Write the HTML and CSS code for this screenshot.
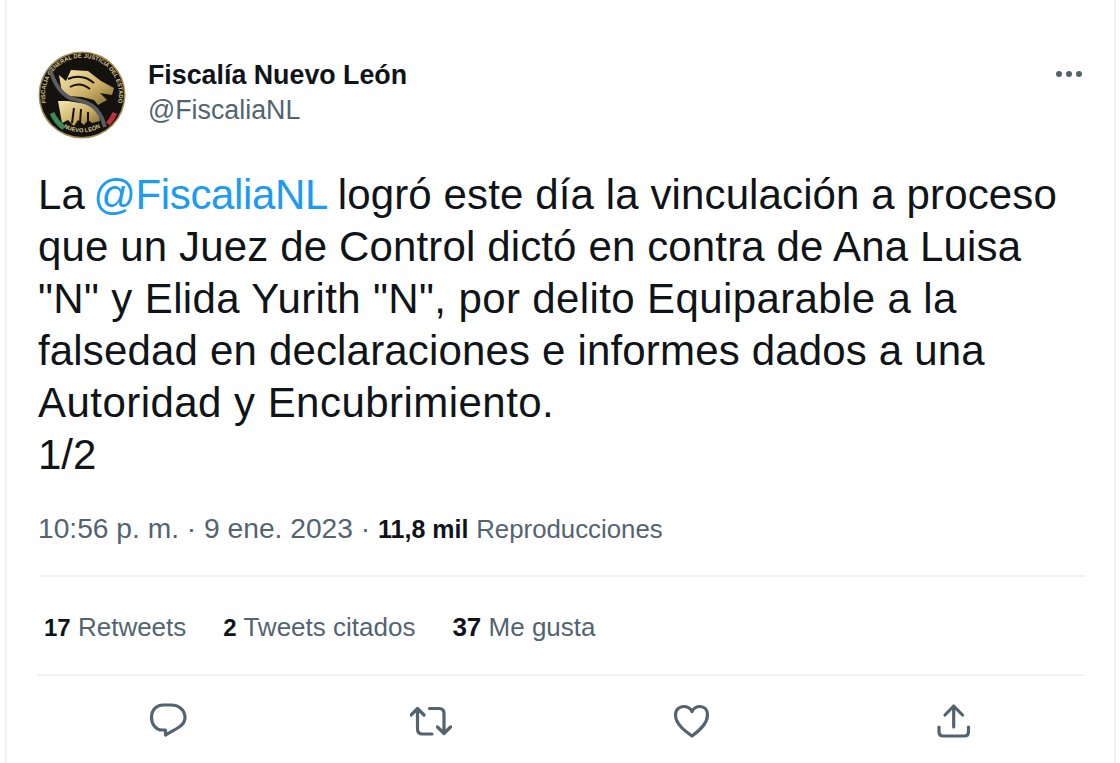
FILE: index.html
```html
<!DOCTYPE html>
<html lang="es">
<head>
<meta charset="utf-8">
<title>Tweet</title>
<link rel="stylesheet" href="styles.css">
</head>
<body>
<main class="card">
  <header class="head">
    <svg class="avatar" viewBox="0 0 88 88" aria-hidden="true">
      <defs>
        <linearGradient id="gold" x1="0" y1="0" x2="1" y2="1">
          <stop offset="0" stop-color="#f4e8b0"/>
          <stop offset=".55" stop-color="#cfb268"/>
          <stop offset="1" stop-color="#7d6a34"/>
        </linearGradient>
        <path id="arcTop" d="M9 66A41 41 0 1 1 79 66" transform="translate(0 -1) translate(4.400 4.400) scale(.9)"/>
        <path id="arcBot" d="M25 76A36 36 0 0 0 63 76"/>
      </defs>
      <circle cx="44" cy="44" r="43.500" fill="#a08a4e"/>
      <circle cx="44" cy="44" r="42" fill="#14120e"/>
      <text class="seal"><textPath href="#arcTop" startOffset="50%" text-anchor="middle">FISCALÍA GENERAL DE JUSTICIA DEL ESTADO</textPath></text>
      <text class="seal"><textPath href="#arcBot" startOffset="50%" text-anchor="middle">NUEVO LEÓN</textPath></text>
      <path d="M14 62Q18 71 26 77" class="flag-g"/>
      <path d="M77 62Q74 68 70 73" class="flag-r"/>
      <path fill="url(#gold)" d="M21 24L28 30L33 19L50 20L63 30L76 37L74 44L62 42L69 49L60 54L56 49L44 46L30 45L24 42Z"/>
      <path fill="url(#gold)" d="M20 50L30 50L48 53L60 60L62 70L54 72L50 69L46 74L40 69L36 75L30 69L24 72Z"/>
      <path d="M30 28Q44 22 56 32M32 36Q42 30 52 38" class="stripe"/>
      <path d="M12 18C16 32 22 42 32 47C45 51 60 50 67 76" class="sash"/>
      <path d="M36 57L34 72M43 58L42 72M50 61L50 70" class="stripe"/>
    </svg>
    <div class="names">
      <div class="name">Fiscalía Nuevo León</div>
      <div class="handle">@FiscaliaNL</div>
    </div>
    <svg class="more" viewBox="0 0 26 6" aria-hidden="true">
      <circle cx="3" cy="3" r="3"/><circle cx="13" cy="3" r="3"/><circle cx="23" cy="3" r="3"/>
    </svg>
  </header>
  <div class="text">
    <div class="line-1">La <span class="mention">@FiscaliaNL</span> logró este día la vinculación a proceso</div>
    <div class="line-2">que un Juez de Control dictó en contra de Ana Luisa</div>
    <div class="line-3">"N" y Elida Yurith "N", por delito Equiparable a la</div>
    <div class="line-4">falsedad en declaraciones e informes dados a una</div>
    <div class="line-5">Autoridad y Encubrimiento.</div>
    <div>1/2</div>
  </div>
  <div class="meta">10:56 p. m. · 9 ene. 2023 · <b>11,8 mil</b> <span class="views">Reproducciones</span></div>
  <div class="stats">
    <span><b>17</b> Retweets</span>
    <span><b>2</b> Tweets citados</span>
    <span class="likes"><b>37</b> Me gusta</span>
  </div>
  <nav class="actions">
    <svg class="icon" viewBox="0 0 42 42" aria-hidden="true"><path d="M15 5H23C32 5 37 11 37 17.500C37 25 30 28 17.500 35V30H14C8 30 3.500 24 3.500 17.500C3.500 10 8.500 5 15 5Z"/></svg>
    <svg class="icon" viewBox="0 0 42 42" aria-hidden="true"><path d="M1 15L7.500 8.500L14 15M7.500 9V29Q7.500 34 12.500 34H22M19.500 8.500H29Q34 8.500 34 13.500V33M27.500 27L34 33.500L40.500 27"/></svg>
    <svg class="icon" viewBox="0 0 42 42" aria-hidden="true"><path d="M21 36C14 31 4.500 24 4.500 15C4.500 9.500 8.500 6.500 12.500 6.500C16 6.500 19.500 8.500 21 11.500C22.500 8.500 25.500 6.500 29 6.500C33 6.500 36.500 9.500 36.500 15C36.500 24 28 31 21 36Z"/></svg>
    <svg class="icon" viewBox="0 0 42 42" aria-hidden="true"><path d="M20.700 27V6M12 15L20.700 6L29.500 15M6 27V32Q6 36 10 36H31.500Q35.500 36 35.500 32V27"/></svg>
  </nav>
</main>
</body>
</html>
```
FILE: styles.css
```css
* { box-sizing: border-box; }
html, body { margin: 0; padding: 0; height: 100%; background: #fff; }
body { overflow: hidden; font-family: "Liberation Sans", Arial, sans-serif; color: #0f1419; }
.card {
  width: 1111px;
  height: 763px;
  margin-left: 5px;
  padding: 0 29px 0 31px;
  border-left: 2px solid #eff3f4;
  border-right: 2px solid #eff3f4;
}
.head { display: flex; align-items: flex-start; padding-top: 51px; }
.avatar { width: 88px; height: 88px; flex: none; }
.seal { font-size: 5.800px; font-weight: 700; fill: #d8c98e; }
.flag-g { fill: none; stroke: #3a8a55; stroke-width: 5; }
.flag-r { fill: none; stroke: #c0313c; stroke-width: 5; }
.sash { fill: none; stroke: #5a5d60; stroke-width: 4; }
.stripe { fill: none; stroke: #14120e; stroke-width: 2; }
.names { margin-left: 22px; padding-top: 8px; }
.name { font-size: 26.800px; line-height: 33px; font-weight: 700; }
.handle { font-size: 26.800px; line-height: 37px; color: #536471; }
.more { width: 26px; height: 6px; margin-left: auto; margin-top: 20px; margin-right: 3px; fill: #536471; }
.text { margin-top: 30px; font-size: 42px; line-height: 52px; white-space: nowrap; }
.line-1 { letter-spacing: .12px; }
.line-2 { letter-spacing: .14px; }
.line-3 { letter-spacing: .38px; }
.line-4 { letter-spacing: .17px; }
.line-5 { letter-spacing: .46px; }
.mention { color: #1d9bf0; letter-spacing: -.36px; margin: 0 -2px 0 -3.500px; }
.meta { margin-top: 28px; font-size: 28.200px; line-height: 38px; color: #536471; padding-bottom: 27px; border-bottom: 2px solid #eff3f4; }
.meta b { color: #0f1419; font-size: 25px; }
.views { font-size: 25.800px; }
.stats { display: flex; gap: 37px; padding: 4px 6px 0; height: 99px; align-items: center; font-size: 26px; color: #536471; border-bottom: 2px solid #eff3f4; }
.stats b { color: #0f1419; font-size: 24px; }
.stats .likes b { font-size: 26px; }
.actions { display: flex; justify-content: space-between; padding: 24px 110px 0; }
.icon { width: 42px; height: 42px; fill: none; stroke: #536471; stroke-width: 3.200; stroke-linecap: round; stroke-linejoin: round; }
```
